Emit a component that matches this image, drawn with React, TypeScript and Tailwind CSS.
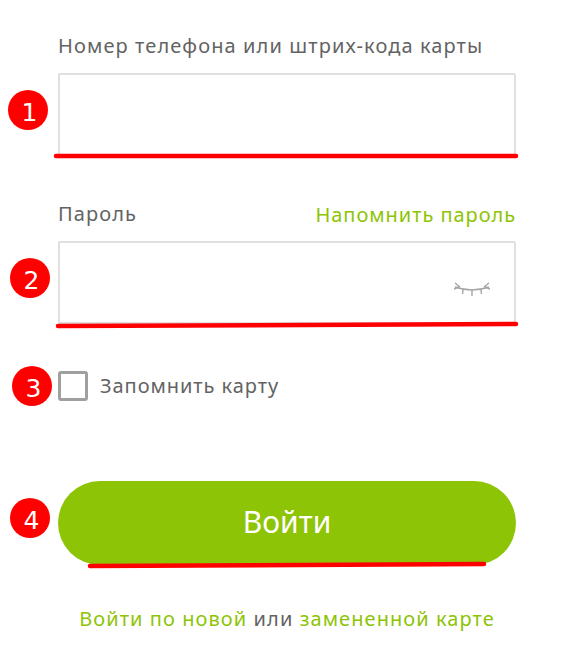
const Badge = ({ n, className }: { n: number; className: string }) => (
  <div
    className={`absolute flex h-10 w-10 items-center justify-center rounded-full bg-[#ff0000] pl-[4px] pt-[5px] text-[25px] leading-none text-white font-['DejaVu_Sans',sans-serif] ${className}`}
  >
    {n}
  </div>
);

const EyeClosed = () => (
  <svg width="36" height="16" viewBox="0 0 36 16" fill="none" stroke="#a4a4a4" strokeWidth="1.4" className="absolute right-[24px] top-[39px]">
    <path d="M1 5 Q18 11 35 5" />
    <path d="M1 1 L6 5 M0 7 L5 5 M9 8 L8.5 12 M18 8 L18 14 M27 8 L27.5 12 M35 1 L30 5 M36 7 L31 5" />
  </svg>
);

const App = () => {
  return (
    <div className="relative h-[664px] w-[564px] overflow-hidden bg-white font-['Noto_Sans',sans-serif] text-[20px] tracking-[0.95px] text-[#636363]">
      <div className="flex w-[516px] flex-col pl-[58px] pt-[32px]">
        <label className="h-[41px] leading-[28px] tracking-[1.1px]">Номер телефона или штрих-кода карты</label>
        <div className="h-[83px] rounded-[2px] border-2 border-[#e0e0e0]" />

        <div className="mt-[45px] flex h-[40px] items-start justify-between leading-[28px]">
          <span className="-mt-px tracking-[1.1px]">Пароль</span>
          <a className="text-[#8dc405]">Напомнить пароль</a>
        </div>
        <div className="relative h-[83px] rounded-[2px] border-2 border-[#e0e0e0]">
          <EyeClosed />
        </div>

        <label className="mt-[47px] flex items-center gap-[12px]">
          <span className="h-[30px] w-[30px] rounded-[3px] border-[3px] border-[#a0a0a0]" />
          <span className="leading-[28px]">Запомнить карту</span>
        </label>

        <button className="mt-[80px] h-[84px] rounded-[42px] bg-[#8dc405] pb-[4px] text-[30px] tracking-normal text-white">
          Войти
        </button>

        <p className="mt-[40px] text-center leading-[28px] tracking-[1.07px]">
          <a className="text-[#8dc405]">Войти по новой</a> или <a className="text-[#8dc405]">замененной карте</a>
        </p>
      </div>

      <Badge n={1} className="left-[8px] top-[90px]" />
      <Badge n={2} className="left-[10px] top-[258px]" />
      <Badge n={3} className="left-[12px] top-[366px]" />
      <Badge n={4} className="left-[10px] top-[498px]" />

      <svg width="564" height="664" className="pointer-events-none absolute left-0 top-0" fill="none" stroke="#ff0000" strokeWidth="4.5" strokeLinecap="round">
        <path d="M56 156 L516 156" />
        <path d="M58 326 L516 324" />
        <path d="M90 566 L484 564" />
      </svg>
    </div>
  );
};

export default App;
